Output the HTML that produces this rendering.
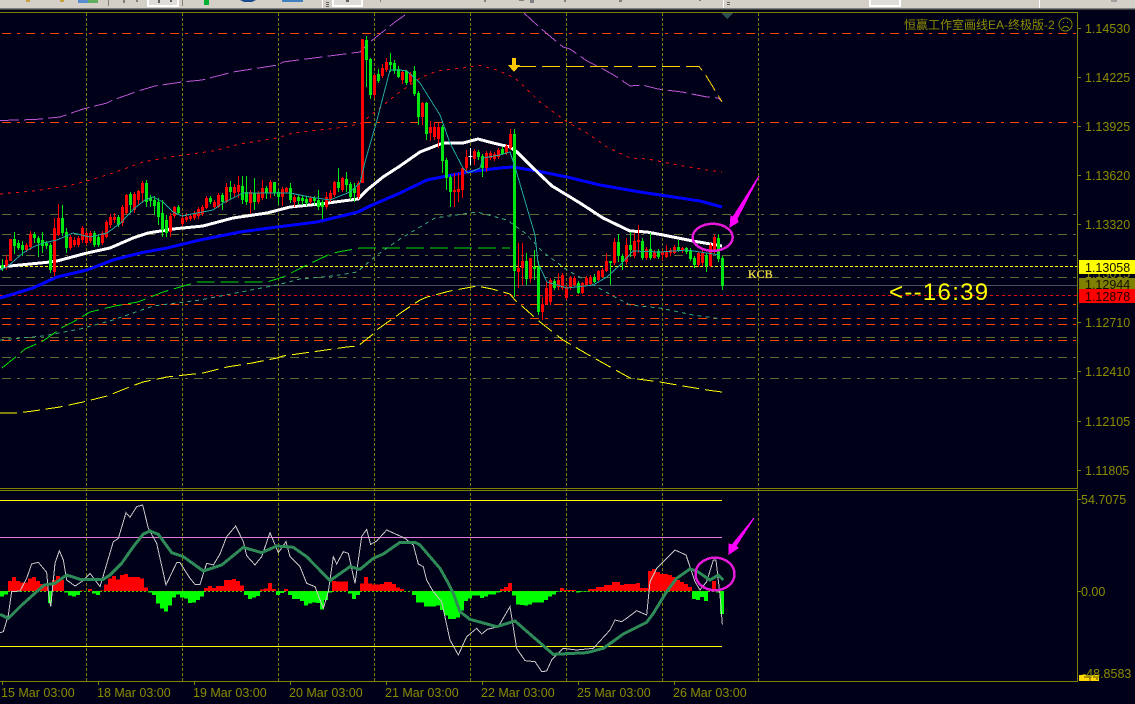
<!DOCTYPE html>
<html><head><meta charset="utf-8"><style>
html,body{margin:0;padding:0;background:#000019;width:1135px;height:704px;overflow:hidden}
svg{display:block;position:absolute;left:0;top:0}
text{font-family:"Liberation Sans","Noto Sans CJK SC",sans-serif;font-size:12.5px;fill:#8c8c00}
</style></head><body>
<svg width="1135" height="704" viewBox="0 0 1135 704" shape-rendering="crispEdges" fill="none">
<rect width="1135" height="704" fill="#000019"/>
<!-- toolbar -->
<rect width="1135" height="8" fill="#d4d0c8"/><rect y="8" width="1135" height="1" fill="#808080"/><rect y="9" width="1135" height="1" fill="#404040"/>
<g>
<rect x="26" y="0" width="4" height="2" fill="#c8a040"/><rect x="60" y="0" width="4" height="2" fill="#c8a040"/>
<rect x="78" y="0" width="10" height="3" fill="#5a8ad0"/><rect x="88" y="0" width="10" height="3" fill="#60b060"/>
<rect x="108" y="0" width="1" height="6" fill="#808080"/><rect x="123" y="0" width="2" height="3" fill="#808080"/><rect x="136" y="0" width="2" height="2" fill="#808080"/>
<rect x="147" y="0" width="32" height="7" fill="#fff"/><rect x="149" y="0" width="28" height="5" fill="#e0ddd8"/><rect x="158" y="0" width="2" height="3" fill="#606060"/><rect x="170" y="0" width="2" height="2" fill="#606060"/>
<rect x="182" y="0" width="1" height="6" fill="#808080"/><rect x="204" y="0" width="5" height="5" fill="#00b030"/>
<path d="M240 0H256L252 2H244Z" fill="#1a4a90"/><rect x="282" y="0" width="21" height="2" fill="#4080c0"/>
<rect x="322" y="0" width="1" height="8" fill="#fff"/><rect x="326" y="2" width="3" height="1" fill="#606060"/><rect x="326" y="4" width="3" height="1" fill="#606060"/><rect x="326" y="6" width="3" height="1" fill="#606060"/>
<rect x="332" y="0" width="31" height="7" fill="#fff"/><rect x="334" y="0" width="27" height="5" fill="#e0ddd8"/><rect x="346" y="0" width="3" height="2" fill="#606060"/>
<rect x="380" y="0" width="1" height="2" fill="#808080"/><rect x="484" y="0" width="2" height="2" fill="#808080"/><rect x="519" y="0" width="5" height="1" fill="#808080"/><rect x="530" y="0" width="4" height="3" fill="#808080"/><rect x="564" y="0" width="2" height="2" fill="#808080"/><rect x="619" y="0" width="3" height="2" fill="#808080"/><rect x="699" y="0" width="2" height="1" fill="#808080"/>
<rect x="723" y="0" width="1" height="8" fill="#fff"/><rect x="727" y="2" width="3" height="1" fill="#606060"/><rect x="727" y="4" width="3" height="1" fill="#606060"/>
<rect x="869" y="0" width="32" height="7" fill="#fff"/><rect x="871" y="0" width="28" height="5" fill="#e0ddd8"/><rect x="1039" y="0" width="1" height="8" fill="#fff"/><rect x="1111" y="0" width="6" height="2" fill="#a0a0a0"/>
</g>
<!-- horizontal levels -->
<g stroke-width="1">
<path stroke="#5e6b33" stroke-dasharray="9 6 3 6" d="M2 214.500H1077M2 234.500H1077M2 255.500H1077M2 277.500H1077M2 337.500H1077M2 357.500H1077M2 378.500H1077"/>
<path stroke="#ff4500" stroke-dasharray="9 6 3 6" d="M2 33.500H1077M2 122.500H1077M2 304.500H1077M2 318.500H1077M2 324.500H1077M2 340.500H1077"/>
<path stroke="#ffff00" stroke-dasharray="3 2" d="M0 266.500H1077"/>
<path stroke="#4a5058" d="M0 285.500H1077"/>
<path stroke="#e01010" stroke-dasharray="3 3" d="M0 295.500H1077"/>
</g>
<!-- vertical grid -->
<path stroke="#808000" stroke-dasharray="3 2" d="M86.500 13V681M182.500 13V681M278.500 13V681M374.500 13V681M470.500 13V681M566.500 13V681M662.500 13V681M758.500 13V681"/>
<!-- frames -->
<path stroke="#808000" d="M0 12.500H1077.500V488.500H0M0 490.500H1077.500V681.500H0"/>
<path stroke="#808000" d="M1078 28.500h3M1078 77.500h3M1078 126.500h3M1078 175.500h3M1078 224.500h3M1078 322.500h3M1078 371.500h3M1078 421.500h3M1078 470.500h3M1078 499.500h3M1078 591.500h3M2.500 682V685M98.500 682V685M194.500 682V685M290.500 682V685M386.500 682V685M482.500 682V685M578.500 682V685M674.500 682V685"/>
<path d="M721 13H733L727 19Z" fill="#2f5050"/>
<!-- bands -->
<polyline stroke="#ba55d3" stroke-dasharray="19 5" points="0,120.500 35,119.500 60,117 83,109 107,103 113,100 130,94 138,91 155,86 182,82 202,80 233,72 278,65 283,62 360,52 370,42 395,22 408,13"/>
<polyline stroke="#ba55d3" stroke-dasharray="19 5" points="524,13 538,26 545,32 563,47 570,49 587,61 603,69 617,77 630,86 642,85 658,89 682,92 707,97 718,98 722,101"/>
<polyline stroke="#f01010" stroke-dasharray="3 5" points="0,194 33,191 67,186 87,181 113,173 143,162 170,157 213,151 240,144 277,138 293,133 337,128 360,124 397,94 420,78 437,71 470,67 478,65 497,70 515,78 540,102 567,122 587,133 607,147 630,158 648,159 683,166 707,170 722,172"/>
<polyline stroke="#00e000" stroke-dasharray="18 6" points="2,368 18,355 25,349 43,341 63,327 73,322 90,312 115,306 138,302 163,292 187,285 197,282 267,282 283,277 307,265 330,254 338,252 360,248 510,248"/>
<polyline stroke="#3aa878" stroke-dasharray="4 4" points="0,340 43,336 80,329 113,320 153,306 200,300 277,285 300,279 333,276 357,272 377,255 400,239 435,218 477,212 507,220 525,233 543,252 567,270 613,296 630,305 660,308 693,315 722,319"/>
<polyline stroke="#ffff00" stroke-dasharray="17 6" points="0,413 17,413 33,411 60,407 83,402 107,396 132,386 143,382 167,377 203,373 227,367 252,363 277,358 283,356 347,347 358,346 372,335 378,329 395,317 402,312 420,300 427,297 450,291 477,286 492,289 510,294 515,300 540,322 563,340 587,354 612,368 630,378 660,382 683,386 707,390 722,392"/>
<!-- gold line -->
<polyline stroke="#ffd000" stroke-dasharray="18 6" points="518,66.500 699,66.500 705,74 716,92 722,102"/>
<path d="M512 58H516V65H520L514 72L508 65H512Z" fill="#ffc800"/>
<!-- MAs -->
<polyline stroke="#0000ff" stroke-width="3" points="0,298 33,288 57,277 87,270 113,260 140,253 167,248 200,240 240,232 277,227 317,222 358,212 370,206 400,193 427,180 467,172 500,168 513,167 537,171 567,177 600,185 640,192 667,196 700,201 722,207"/>
<polyline stroke="#ffffff" stroke-width="3" points="0,267 50,262 57,261 87,253 110,248 133,238 148,233 173,229 203,226 233,218 267,213 290,207 320,204 358,199 367,190 383,177 400,166 420,152 443,143 463,143 478,139 493,143 510,147 517,152 533,168 552,186 580,203 603,218 630,231 647,232 663,235 693,241 722,246"/>
<!-- candles -->
<g transform="translate(-.5 0)">
<path stroke="#ff0000" d="M7 255V270M11 239V261M27 243V252M31 231V250M55 218V276M59 204V236M71 235V250M75 237V247M79 236V247M83 226V243M87 231V245M91 231V243M103 231V245M107 220V238M111 214V228M115 213V223M123 205V226M127 194V215M135 192V213M139 190V205M143 181V203M171 213V237M175 206V218M183 214V226M187 213V222M191 214V221M195 211V220M199 207V219M203 205V216M207 196V209M215 200V209M219 193V208M227 183V203M235 184V197M239 176V198M251 190V214M259 191V204M263 180V200M271 180V198M283 187V206M287 187V193M295 195V207M311 196V204M327 192V209M331 190V202M335 181V197M343 177V192M359 181V199M363 39V183M375 74V98M383 64V78M387 58V72M403 70V84M411 72V84M423 102V125M431 121V141M435 122V140M439 123V148M455 173V207M459 173V202M463 166V198M467 150V173M475 149V165M487 151V172M491 151V160M495 152V161M499 148V159M507 144V155M511 129V150M519 243V288M523 243V285M531 258V283M543 297V320M547 282V305M551 278V305M559 273V290M563 273V290M567 285V300M571 276V290M575 276V287M583 282V294M587 276V286M591 275V285M599 270V281M603 268V278M607 253V272M615 238V265M627 238V265M635 233V258M639 225V253M647 247V260M655 250V259M663 250V260M667 245V258M671 248V256M675 245V254M683 247V253M699 252V267M703 250V266M711 243V267M715 234V254"/>
<path stroke="#ff0000" stroke-width="3" d="M7 260V268M11 239V261M27 245V250M31 234V247M55 228V272M59 218V235M71 237V248M75 240V245M79 238V245M83 228V240M87 233V243M91 233V241M103 233V243M107 222V237M111 217V225M115 217V220M123 207V223M127 195V213M135 194V210M139 191V200M143 183V193M171 216V232M175 207V216M183 218V224M187 217V220M191 216V219M195 214V218M199 209V216M203 207V214M207 198V208M215 202V207M219 195V207M227 187V202M235 187V193M239 185V192M251 192V203M259 193V202M263 188V198M271 182V193M283 189V197M287 188V192M295 197V202M311 198V202M327 197V207M331 193V200M335 182V195M343 178V190M359 183V197M363 39V183M375 75V95M383 68V76M387 62V70M403 72V80M411 74V82M423 103V117M431 127V133M435 127V137M439 127V139M455 190V192M459 189V192M463 168V190M467 157V168M475 151V159M487 153V168M491 153V158M495 154V159M499 150V157M507 146V153M511 134V148M519 268V272M523 261V268M531 258V279M543 304V312M547 288V304M551 280V302M559 280V287M563 275V288M567 287V298M571 278V288M575 278V285M583 283V293M587 278V285M591 277V284M599 271V280M603 270V277M607 261V271M615 242V263M627 245V262M635 241V256M639 240V242M647 249V258M655 252V258M663 252V255M667 251V257M671 250V253M675 247V253M683 248V250M699 253V265M703 253V263M711 245V266M715 237V252"/>
<path stroke="#00e810" d="M3 259V271M15 232V254M19 240V250M23 241V256M35 232V243M39 236V257M43 232V253M47 241V249M51 243V273M63 205V236M67 228V253M95 231V247M99 235V247M119 215V227M131 192V213M147 180V207M151 195V207M155 196V215M159 198V225M163 200V237M167 215V237M179 205V215M211 196V204M223 193V210M231 181V199M243 176V204M247 176V205M255 178V210M267 186V199M275 182V196M279 190V205M291 183V203M299 195V205M303 196V205M307 197V206M315 196V205M319 190V210M323 200V219M339 168V192M347 172V192M351 182V200M355 183V202M367 36V87M371 58V99M379 69V83M391 53V72M395 60V74M399 66V78M407 70V85M415 66V96M419 91V125M427 102V140M443 125V173M447 158V190M451 175V207M479 150V160M483 154V177M503 147V155M515 129V297M527 253V285M535 250V280M539 261V315M555 279V290M579 281V294M595 274V283M611 261V285M619 234V262M623 254V270M631 232V257M643 238V260M651 233V260M659 249V259M679 240V252M687 247V254M691 248V261M695 256V268M707 253V272M719 234V262M723 256V290"/>
<path stroke="#00e810" stroke-width="3" d="M3 265V268M15 239V246M19 243V248M23 245V250M35 234V238M39 238V243M43 240V246M47 243V246M51 245V270M63 218V233M67 232V248M95 233V245M99 237V245M119 217V225M131 194V205M147 183V202M151 198V201M155 200V206M159 202V217M163 213V230M167 220V233M179 207V213M211 198V202M223 195V202M231 187V192M243 186V200M247 192V202M255 193V202M267 188V193M275 182V193M279 192V197M291 188V200M299 197V201M303 198V201M307 199V203M315 198V201M319 200V207M323 202V207M339 182V188M347 179V185M351 184V197M355 188V193M367 40V60M371 59V95M379 74V81M391 62V65M395 63V71M399 69V77M407 71V83M415 71V94M419 93V117M427 103V134M443 127V161M447 160V178M451 177V192M479 152V157M483 156V168M503 149V154M515 134V271M527 261V279M535 267V269M539 267V312M555 281V288M579 283V293M595 277V282M611 261V263M619 242V256M623 256V262M631 245V250M643 241V258M651 249V258M659 251V257M679 247V250M687 248V252M691 250V259M695 258V265M707 255V266M719 238V259M723 258V286"/>
<path stroke="#fff" d="M471 148V165M469 156.500H473"/>
</g>
<polyline stroke="#20a8a0" points="0,270 7,267 23,253 33,247 43,243 57,240 73,233 90,237 107,233 122,222 125,218 135,208 145,200 153,197 163,202 173,212 182,216 197,213 213,210 223,203 243,193 267,193 290,193 310,197 330,200 350,192 360,183 365,162 377,120 390,70 400,70 407,71 420,83 440,115 450,143 463,168 468,173 480,168 483,158 500,155 510,152 515,167 535,235 538,263 547,282 567,288 593,285 607,277 620,265 633,251 660,252 687,250 720,255"/>
<!-- arrows and circles -->
<path d="M759 176L737 219L738 222L730 227L731 216L733 217Z" fill="#ff00ff" stroke="#ff00ff"/>
<ellipse cx="712.700" cy="237.300" rx="20" ry="13.500" stroke="#e619d8" stroke-width="2.500"/>
<!-- oscillator -->
<path stroke="#ffff00" d="M0 500.500H722M0 646.500H722"/>
<path stroke="#e878e0" d="M0 537.500H722"/>
<g transform="translate(0 485) scale(.33333)">
<path fill="#ff0000" d="M24 318V288H36V276H48V288H60V293H84V280H96V276H108V288H120V297H132V305H144V318ZM156 318V285H168V273H180V285H192V318ZM240 318V316H252V318ZM264 318V312H276V318ZM300 318V316H312V298H324V280H336V273H348V283H360V270H372V267H384V276H420V281H432V307H444V318ZM612 318V309H624V303H636V309H648V303H672V285H696V282H708V288H720V302H732V318ZM780 318V313H792V310H804V294H816V312H828V318ZM852 318V312H864V318ZM996 318V288H1008V290H1044V318ZM1080 318V295H1092V276H1104V295H1116V299H1140V297H1152V291H1176V297H1188V307H1200V312H1212V318ZM1500 318V312H1512V306H1524V294H1536V318ZM1680 318V309H1692V315H1728V318ZM1764 318V312H1788V306H1812V300H1836V291H1860V300H1872V297H1908V294H1920V309H1944V258H1956V252H1968V261H1980V267H2004V270H2016V276H2028V285H2040V291H2052V297H2064V306H2076V318ZM2136 318V288H2148V318Z"/>
<path fill="#00ff00" d="M0 318V335H12V328H24V318ZM144 318V354H156V318ZM192 318V322H204V332H216V335H228V330H240V318ZM276 318V325H288V330H300V318ZM444 318V322H456V330H468V355H480V370H492V380H504V362H516V338H528V328H540V338H552V340H564V354H576V352H588V345H600V335H612V318ZM732 318V330H744V342H756V338H768V333H780V318ZM828 318V330H840V324H852V318ZM864 318V330H876V342H900V348H912V362H924V356H936V352H948V354H960V374H972V345H984V322H996V318ZM1044 318V325H1056V342H1068V330H1080V318ZM1236 318V330H1248V352H1272V365H1308V362H1320V375H1332V392H1344V402H1368V397H1380V377H1392V348H1404V340H1416V332H1440V339H1452V335H1464V328H1488V322H1500V318ZM1536 318V332H1548V358H1560V360H1572V362H1584V358H1596V352H1632V345H1644V335H1656V328H1668V320H1680V318ZM1728 318V323H1740V320H1764V318ZM2076 318V342H2088V345H2100V336H2112V348H2124V318ZM2148 318V323H2160V387H2172V318Z"/>
</g>
<path stroke="#40d000" stroke-dasharray="2 2" d="M0 591.500H722"/>
<g transform="translate(0 485) scale(.33333)">
<polyline stroke="#c8c8c8" stroke-width="3" points="0,443 10,440 25,390 35,320 60,318 80,280 95,237 115,232 140,262 145,320 152,365 165,235 178,197 190,225 200,285 225,303 245,290 270,265 300,305 340,170 355,160 378,83 390,97 410,65 428,60 445,130 470,175 498,300 530,233 540,233 570,280 585,298 600,298 620,235 640,240 660,207 680,155 707,123 730,170 740,212 765,240 785,215 810,143 835,203 858,170 870,215 900,245 920,295 945,305 970,370 985,320 1000,215 1010,237 1030,200 1045,205 1065,295 1085,155 1100,133 1112,178 1130,168 1160,135 1200,153 1215,160 1240,180 1255,237 1270,245 1280,285 1300,320 1325,350 1350,465 1375,510 1400,455 1430,430 1445,447 1462,433 1495,425 1530,365 1550,490 1575,527 1605,530 1625,560 1640,558 1655,525 1690,490 1730,495 1780,490 1830,435 1845,405 1865,410 1880,400 1910,377 1940,390 1950,290 1970,250 2025,195 2058,210 2085,290 2100,315 2120,290 2140,225 2148,225 2160,330 2167,418"/>
<polyline stroke="#2e8b57" stroke-width="9" points="0,388 25,400 60,365 110,320 133,300 165,295 200,270 240,283 310,283 330,270 365,235 400,185 430,147 450,138 475,148 515,203 550,215 610,258 665,240 730,187 785,203 830,183 880,187 920,215 990,287 1050,245 1080,253 1120,220 1150,207 1200,172 1245,172 1260,180 1320,250 1345,295 1360,325 1380,380 1410,403 1490,425 1545,408 1570,430 1660,508 1760,503 1810,490 1870,447 1940,412 1960,385 2000,320 2030,280 2070,252 2090,258 2130,285 2155,270 2170,285"/>
</g>
<path d="M754 518L736 546L738 548L729 554L729 544L732 545Z" fill="#ff00ff" stroke="#ff00ff"/>
<ellipse cx="715" cy="574" rx="19.500" ry="16.300" stroke="#e619d8" stroke-width="2.500"/>
<!-- axis text -->
<text x="1085" y="33">1.14530</text><text x="1085" y="82">1.14225</text><text x="1085" y="131">1.13925</text><text x="1085" y="180">1.13620</text><text x="1085" y="229">1.13320</text><text x="1085" y="278">1.13015</text><text x="1085" y="327">1.12710</text><text x="1085" y="376">1.12410</text><text x="1085" y="426">1.12105</text><text x="1085" y="475">1.11805</text>
<rect x="1079" y="260" width="56" height="14" fill="#ffff00"/><rect x="1079" y="278" width="56" height="11" fill="#808000"/>
<text x="1085" y="272" style="fill:#101000">1.13058</text><text x="1085" y="289" style="fill:#101000">1.12944</text>
<rect x="1079" y="289" width="56" height="14" fill="#ff0000"/><text x="1085" y="301" style="fill:#200000">1.12878</text>
<text x="1081" y="504">54.7075</text><text x="1081" y="596">0.00</text>
<rect x="1079" y="675" width="20" height="6" fill="#ffd800"/><path d="M1084 677h6M1090 677v4M1093 677h4v3" stroke="#604000"/>
<text x="1082" y="678">-48.8583</text>
<text x="1" y="697">15 Mar 03:00</text><text x="97" y="697">18 Mar 03:00</text><text x="193" y="697">19 Mar 03:00</text><text x="289" y="697">20 Mar 03:00</text><text x="385" y="697">21 Mar 03:00</text><text x="481" y="697">22 Mar 03:00</text><text x="577" y="697">25 Mar 03:00</text><text x="673" y="697">26 Mar 03:00</text>
<text x="904" y="29" style="font-size:12px">恒赢工作室画线EA-终极版-2</text>
<circle cx="1065.500" cy="24.500" r="6.500" stroke="#808000"/><path d="M1063 22.500h1M1067 22.500h1M1062 28.500L1064 26.500H1067L1069 28.500" stroke="#808000"/>
<text x="748" y="278" stroke="#eedd44" stroke-width=".3" style="font-family:'Liberation Serif',serif;font-size:12px;fill:#eedd44">KCB</text>
<text x="889" y="300" style="font-size:24px;letter-spacing:1.300px;fill:#ffff00">&lt;--16:39</text>
</svg>
</body></html>
